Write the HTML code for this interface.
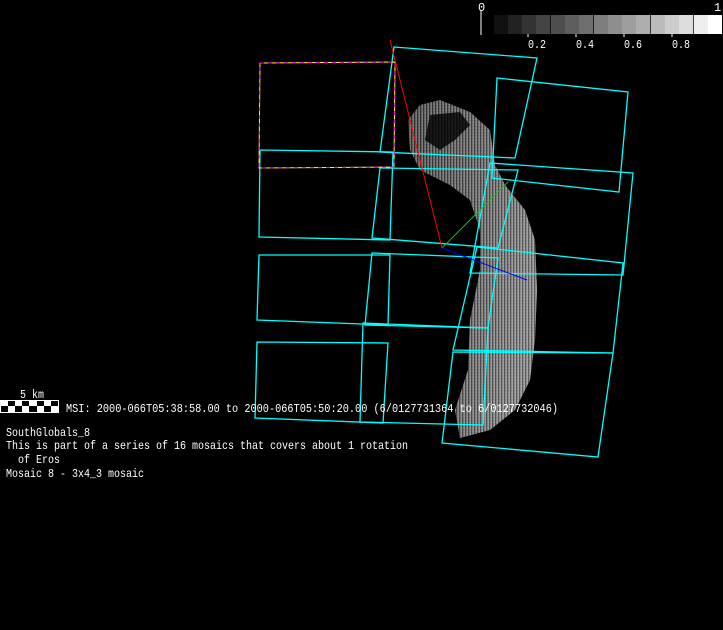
<!DOCTYPE html>
<html><head><style>
html,body{margin:0;padding:0;background:#000;width:723px;height:630px;overflow:hidden}
svg{display:block}
text{font-family:"Liberation Mono",monospace;font-size:12px;fill:#fff}
</style></head><body>
<svg width="723" height="630" viewBox="0 0 723 630">
<defs>
<linearGradient id="g" x1="0" y1="0" x2="1" y2="0.3">
<stop offset="0" stop-color="#444"/><stop offset="0.6" stop-color="#888"/><stop offset="1" stop-color="#ccc"/>
</linearGradient>
<pattern id="p" width="3" height="3" patternUnits="userSpaceOnUse">
<rect width="3" height="3" fill="url(#g)"/><rect width="1" height="3" fill="#000" opacity="0.6"/>
</pattern>
</defs>
<!-- asteroid -->
<path d="M420,105 L440,100 L470,112 L490,130 L495,165 L505,185 L525,210 L535,240 L537,290 L535,340 L530,380 L515,410 L490,430 L460,438 L455,410 L468,370 L470,320 L480,270 L480,230 L470,200 L450,185 L420,170 L410,150 L408,120 Z" fill="url(#g)" opacity="0.7"/>
<path d="M420,105 L440,100 L470,112 L490,130 L495,165 L505,185 L525,210 L535,240 L537,290 L535,340 L530,380 L515,410 L490,430 L460,438 L455,410 L468,370 L470,320 L480,270 L480,230 L470,200 L450,185 L420,170 L410,150 L408,120 Z" fill="url(#p)" opacity="0.5"/>
<path d="M430,115 L460,112 L470,125 L455,140 L440,150 L425,140 Z" fill="#000" opacity="0.8"/>
<!-- cyan quads -->
<g fill="none" stroke="#0ff" stroke-width="1.3">
<polygon points="260,150 393,152 390,240 259,237"/>
<polygon points="259,255 390,255 388,325 257,320"/>
<polygon points="257,342 388,343 383,423 255,418"/>
<polygon points="394,47 537,58 515,158 380,152"/>
<polygon points="380,168 518,170 498,248 372,238"/>
<polygon points="372,253 498,258 488,328 365,325"/>
<polygon points="363,323 488,328 483,425 360,422"/>
<polygon points="497,78 628,92 619,192 492,178"/>
<polygon points="490,163 633,173 623,275 470,273"/>
<polygon points="477,247 623,263 613,353 453,350"/>
<polygon points="453,352 613,353 598,457 442,443"/>
</g>
<polygon points="260,63 395,62 394,167 259,168" fill="none" stroke="#ff0" stroke-width="1"/>
<polygon points="260,63 395,62 394,167 259,168" fill="none" stroke="#f0f" stroke-width="1" stroke-dasharray="4,4"/>
<line x1="390" y1="40" x2="442" y2="248" stroke="#f00"/>
<line x1="442" y1="248" x2="508" y2="182" stroke="#0c0"/>
<line x1="442" y1="248" x2="527" y2="280" stroke="#00f"/>
<!-- colorbar -->
<line x1="481" y1="10" x2="481" y2="35" stroke="#fff"/>
<text x="478" y="11">0</text>
<text x="714" y="11">1</text>
<g>
<rect x="494" y="15" width="14.3" height="19" fill="#111"/>
<rect x="508" y="15" width="14.3" height="19" fill="#222"/>
<rect x="522" y="15" width="14.3" height="19" fill="#333"/>
<rect x="536" y="15" width="14.3" height="19" fill="#444"/>
<rect x="551" y="15" width="14.3" height="19" fill="#4e4e4e"/>
<rect x="565" y="15" width="14.3" height="19" fill="#5e5e5e"/>
<rect x="579" y="15" width="14.3" height="19" fill="#6e6e6e"/>
<rect x="594" y="15" width="14.3" height="19" fill="#7e7e7e"/>
<rect x="608" y="15" width="14.3" height="19" fill="#8e8e8e"/>
<rect x="622" y="15" width="14.3" height="19" fill="#9e9e9e"/>
<rect x="636" y="15" width="14.3" height="19" fill="#aeaeae"/>
<rect x="651" y="15" width="14.3" height="19" fill="#bbb"/>
<rect x="665" y="15" width="14.3" height="19" fill="#ccc"/>
<rect x="679" y="15" width="14.3" height="19" fill="#ddd"/>
<rect x="694" y="15" width="14.3" height="19" fill="#eee"/>
<rect x="708" y="15" width="14" height="19" fill="#fff"/>
</g>
<g stroke="#fff"><line x1="528" y1="34" x2="528" y2="37"/><line x1="576" y1="34" x2="576" y2="37"/><line x1="624" y1="34" x2="624" y2="37"/><line x1="672" y1="34" x2="672" y2="37"/></g>
<text x="528" y="48" textLength="18" lengthAdjust="spacingAndGlyphs">0.2</text><text x="576" y="48" textLength="18" lengthAdjust="spacingAndGlyphs">0.4</text><text x="624" y="48" textLength="18" lengthAdjust="spacingAndGlyphs">0.6</text><text x="672" y="48" textLength="18" lengthAdjust="spacingAndGlyphs">0.8</text>
<!-- scale bar -->
<text x="20" y="398" textLength="24" lengthAdjust="spacingAndGlyphs">5 km</text>
<rect x="0.5" y="400.5" width="58" height="12" fill="#fff" stroke="#fff"/>
<g fill="#000">
<rect x="8" y="401" width="7" height="5"/><rect x="22" y="401" width="7" height="5"/><rect x="37" y="401" width="7" height="5"/><rect x="51" y="401" width="7" height="5"/>
<rect x="1" y="406" width="7" height="6"/><rect x="15" y="406" width="7" height="6"/><rect x="29" y="406" width="8" height="6"/><rect x="44" y="406" width="7" height="6"/>
</g>
<text x="66" y="412" textLength="492" lengthAdjust="spacingAndGlyphs">MSI:  2000-066T05:38:58.00 to 2000-066T05:50:20.00 (6/0127731364 to 6/0127732046)</text>
<text x="6" y="436" textLength="84" lengthAdjust="spacingAndGlyphs">SouthGlobals_8</text>
<text x="6" y="449" textLength="402" lengthAdjust="spacingAndGlyphs">This is part of a series of 16 mosaics that covers about 1 rotation</text>
<text x="18" y="463" textLength="42" lengthAdjust="spacingAndGlyphs">of Eros</text>
<text x="6" y="477" textLength="138" lengthAdjust="spacingAndGlyphs">Mosaic 8 - 3x4_3 mosaic</text>
</svg>
</body></html>
